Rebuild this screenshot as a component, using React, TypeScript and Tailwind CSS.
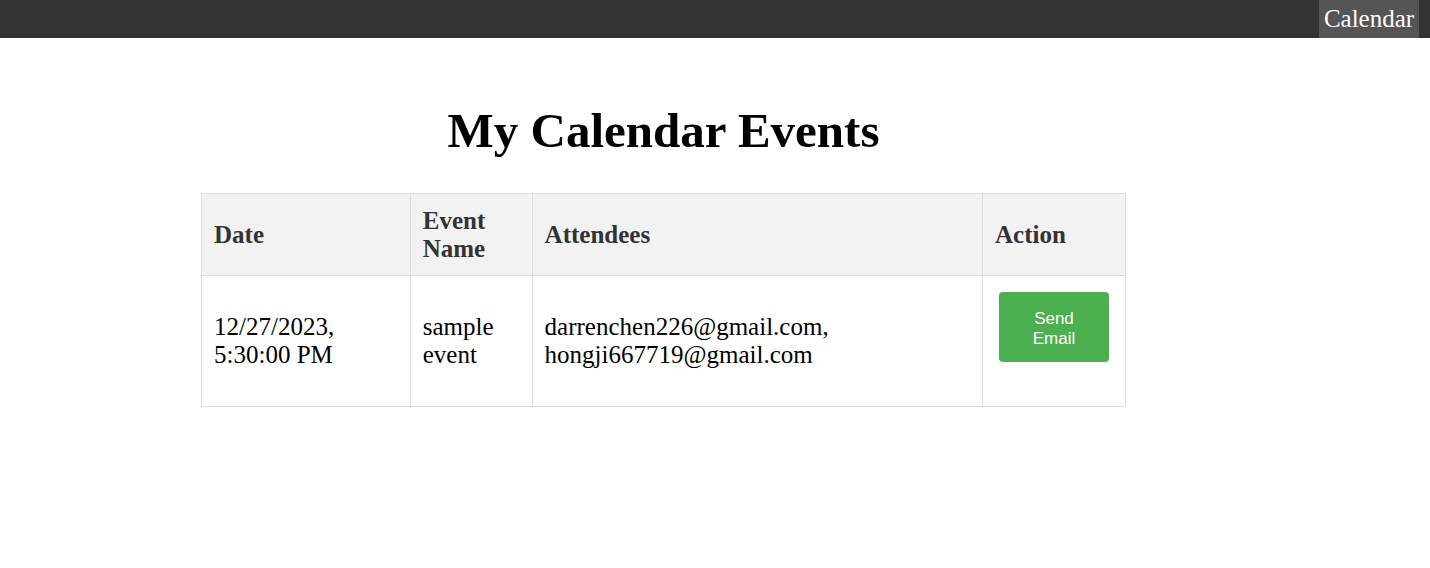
export default function App() {
  const serif = { fontFamily: '"Liberation Serif", "Times New Roman", serif' };
  return (
    <div className="min-h-[568px] bg-white" style={serif}>
      <nav className="h-[38px] bg-[#333333] flex justify-end pr-[11px]">
        <a className="h-[38px] w-[100px] bg-[#555555] text-white text-[25px] leading-[38px] text-center">Calendar</a>
      </nav>
      <div className="ml-[201px] w-[925px]">
        <h1 className="mt-[65px] mb-[34px] text-center text-[49px] leading-[56px] font-bold text-black">My Calendar Events</h1>
        <table className="border-collapse w-[925px] text-[25px] leading-[28px]">
          <thead>
            <tr className="bg-[#f2f2f2] text-[#333333]">
              <th className="w-[209px] h-[82px] border border-[#dddddd] px-[12px] py-[12px] text-left font-bold">Date</th>
              <th className="w-[122px] border border-[#dddddd] px-[12px] py-[12px] text-left font-bold">Event Name</th>
              <th className="w-[451px] border border-[#dddddd] px-[12px] py-[12px] text-left font-bold">Attendees</th>
              <th className="w-[143px] border border-[#dddddd] px-[12px] py-[12px] text-left font-bold">Action</th>
            </tr>
          </thead>
          <tbody>
            <tr className="text-black">
              <td className="h-[131px] border border-[#dddddd] px-[12px] py-[12px] align-middle">12/27/2023,<br />5:30:00 PM</td>
              <td className="border border-[#dddddd] px-[12px] py-[12px] align-middle">sample event</td>
              <td className="border border-[#dddddd] px-[12px] py-[12px] align-middle">darrenchen226@gmail.com,<br />hongji667719@gmail.com</td>
              <td className="border border-[#dddddd] pl-[16px] pr-[14px] pt-[16px] pb-[12px] align-top">
                <button
                  className="w-[110px] h-[70px] pt-[3px] bg-[#4caf50] text-white rounded-[4px] text-[17px] leading-[20px] flex flex-col items-center justify-center"
                  style={{ fontFamily: '"Liberation Sans", Arial, sans-serif' }}
                >
                  <span>Send</span>
                  <span>Email</span>
                </button>
              </td>
            </tr>
          </tbody>
        </table>
      </div>
    </div>
  );
}
